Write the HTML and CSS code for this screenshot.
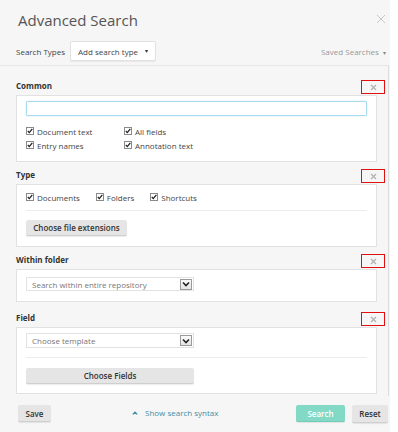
FILE: index.html
```html
<!DOCTYPE html>
<html lang="en">
<head>
<meta charset="utf-8">
<title>Advanced Search</title>
<link rel="stylesheet" href="styles.css">
</head>
<body>
<div class="dialog">
  <div class="header">
    <h1 class="title">Advanced Search</h1>
    <svg class="close" width="10" height="10" viewBox="0 0 10 10"><path d="M1 1L9 9M9 1L1 9" stroke="#c8c8c8" stroke-width="1" fill="none"/></svg>
  </div>
  <div class="toolbar">
    <span class="tb-label">Search Types</span>
    <div class="type-select">Add search type <span class="caret">&#9662;</span></div>
    <span class="saved">Saved Searches <span class="caret">&#9662;</span></span>
  </div>
  <div class="body">
    <section class="section">
      <div class="sec-head"><span class="sec-label">Common</span><span class="remove"><svg width="7" height="7" viewBox="0 0 7 7"><path d="M1 1L6 6M6 1L1 6" stroke="#b0b0b0" stroke-width="1.2" fill="none"/></svg></span></div>
      <div class="panel panel-common">
        <div class="text-input"></div>
        <div class="check-grid">
          <label class="check"><svg class="cb" width="8" height="8" viewBox="0 0 8 8"><rect x="0.5" y="0.5" width="7" height="7" fill="#fff" stroke="#8a8a8a"/><path d="M1.8 4L3.3 5.6L6.3 1.8" stroke="#222" stroke-width="1.3" fill="none"/></svg>Document text</label>
          <label class="check"><svg class="cb" width="8" height="8" viewBox="0 0 8 8"><rect x="0.5" y="0.5" width="7" height="7" fill="#fff" stroke="#8a8a8a"/><path d="M1.8 4L3.3 5.6L6.3 1.8" stroke="#222" stroke-width="1.3" fill="none"/></svg>All fields</label>
          <label class="check"><svg class="cb" width="8" height="8" viewBox="0 0 8 8"><rect x="0.5" y="0.5" width="7" height="7" fill="#fff" stroke="#8a8a8a"/><path d="M1.8 4L3.3 5.6L6.3 1.8" stroke="#222" stroke-width="1.3" fill="none"/></svg>Entry names</label>
          <label class="check"><svg class="cb" width="8" height="8" viewBox="0 0 8 8"><rect x="0.5" y="0.5" width="7" height="7" fill="#fff" stroke="#8a8a8a"/><path d="M1.8 4L3.3 5.6L6.3 1.8" stroke="#222" stroke-width="1.3" fill="none"/></svg>Annotation text</label>
        </div>
      </div>
    </section>

    <section class="section">
      <div class="sec-head"><span class="sec-label">Type</span><span class="remove"><svg width="7" height="7" viewBox="0 0 7 7"><path d="M1 1L6 6M6 1L1 6" stroke="#b0b0b0" stroke-width="1.2" fill="none"/></svg></span></div>
      <div class="panel panel-type">
        <div class="check-row">
          <label class="check"><svg class="cb" width="8" height="8" viewBox="0 0 8 8"><rect x="0.5" y="0.5" width="7" height="7" fill="#fff" stroke="#8a8a8a"/><path d="M1.8 4L3.3 5.6L6.3 1.8" stroke="#222" stroke-width="1.3" fill="none"/></svg>Documents</label>
          <label class="check"><svg class="cb" width="8" height="8" viewBox="0 0 8 8"><rect x="0.5" y="0.5" width="7" height="7" fill="#fff" stroke="#8a8a8a"/><path d="M1.8 4L3.3 5.6L6.3 1.8" stroke="#222" stroke-width="1.3" fill="none"/></svg>Folders</label>
          <label class="check"><svg class="cb" width="8" height="8" viewBox="0 0 8 8"><rect x="0.5" y="0.5" width="7" height="7" fill="#fff" stroke="#8a8a8a"/><path d="M1.8 4L3.3 5.6L6.3 1.8" stroke="#222" stroke-width="1.3" fill="none"/></svg>Shortcuts</label>
        </div>
        <div class="sep sep-type"></div>
        <button class="btn btn-ext">Choose file extensions</button>
      </div>
    </section>

    <section class="section">
      <div class="sec-head"><span class="sec-label">Within folder</span><span class="remove"><svg width="7" height="7" viewBox="0 0 7 7"><path d="M1 1L6 6M6 1L1 6" stroke="#b0b0b0" stroke-width="1.2" fill="none"/></svg></span></div>
      <div class="panel panel-folder">
        <div class="select">Search within entire repository<span class="sel-arrow"><svg width="8" height="6" viewBox="0 0 8 6"><path d="M1 1.5L4 4.5L7 1.5" stroke="#222" stroke-width="1.6" fill="none"/></svg></span></div>
      </div>
    </section>

    <section class="section section-field">
      <div class="sec-head"><span class="sec-label">Field</span><span class="remove"><svg width="7" height="7" viewBox="0 0 7 7"><path d="M1 1L6 6M6 1L1 6" stroke="#b0b0b0" stroke-width="1.2" fill="none"/></svg></span></div>
      <div class="panel panel-field">
        <div class="select select-tall">Choose template<span class="sel-arrow"><svg width="8" height="6" viewBox="0 0 8 6"><path d="M1 1.5L4 4.5L7 1.5" stroke="#222" stroke-width="1.6" fill="none"/></svg></span></div>
        <div class="sep sep-field"></div>
        <button class="btn btn-fields">Choose Fields</button>
      </div>
    </section>
  </div>
  <div class="footer">
    <button class="btn btn-save">Save</button>
    <span class="syntax"><svg class="up" width="6" height="4" viewBox="0 0 6 4"><path d="M0.8 3.4L3 1.2L5.2 3.4" stroke="#3d8fa6" stroke-width="1.3" fill="none"/></svg>Show search syntax</span>
    <button class="btn btn-search">Search</button>
    <button class="btn btn-reset">Reset</button>
  </div>
</div>
</body>
</html>
```

FILE: styles.css
```css
* { box-sizing: border-box; }
html, body { margin: 0; padding: 0; background: #fff; }
body {
  width: 398px;
  height: 432px;
  overflow: hidden;
  font-family: "Open Sans", "Noto Sans", sans-serif;
  font-size: 8px;
  color: #444;
}
.dialog {
  width: 390px;
  height: 432px;
  background: #f6f6f6;
  display: flex;
  flex-direction: column;
}
.header {
  display: flex;
  align-items: center;
  justify-content: space-between;
  padding: 10px 4px 11px 18px;
  height: 41px;
}
.title {
  margin: 0;
  font-size: 15px;
  font-weight: 400;
  line-height: 20px;
  color: #555;
}
.close { margin-top: -2px; margin-right: 0; }
.toolbar {
  display: flex;
  align-items: center;
  height: 24px;
  padding: 0 4px 4px 16px;
}
.tb-label { color: #444; }
.type-select {
  margin-left: 5px;
  width: 86px;
  height: 20px;
  background: #fff;
  border: 1px solid #e2e2e2;
  border-radius: 2px;
  box-shadow: 0 1px 1px rgba(0,0,0,0.06);
  display: flex;
  align-items: center;
  padding-left: 7px;
  color: #444;
}
.type-select .caret { margin-left: 7px; font-size: 6px; color: #333; }
.saved { margin-left: auto; color: #999; }
.saved .caret { font-size: 6px; margin-left: 2px; color: #888; }
.body {
  width: 389px;
  height: 331px;
  border-top: 1px solid #e6e6e6;
  border-right: 1px solid #dcdcdc;
  padding: 14px 3px 0 16px;
  overflow: hidden;
}
.section { margin-top: 7px; }
.section:first-child { margin-top: 0; }
.section-field { margin-top: 10px; }
.sec-head {
  display: flex;
  justify-content: space-between;
  height: 14px;
  margin-bottom: 1px;
}
.sec-label {
  font-weight: 700;
  color: #333;
  line-height: 12px;
}
.remove {
  width: 24px;
  height: 14px;
  border: 1px solid #e01010;
  display: flex;
  align-items: center;
  justify-content: center;
}
.panel {
  width: 361px;
  background: #fff;
  border: 1px solid #e2e2e2;
  padding: 5px 9px 9px 9px;
}
.text-input {
  height: 15px;
  border: 1px solid #a9d9ec;
  border-radius: 1px;
  box-shadow: 0 0 2px rgba(120,200,230,0.4);
}
.check-grid {
  margin-top: 8px;
  display: grid;
  grid-template-columns: 98px auto;
}
.check {
  display: flex;
  align-items: center;
  height: 14px;
  color: #444;
}
.cb { margin-right: 3px; flex: none; }
.check-row {
  display: flex;
  gap: 16px;
}
.panel-type { padding-bottom: 10px; }
.sep { height: 1px; background: #ececec; }
.sep-type { margin: 6px 0 9px; }
.btn {
  font-family: "Open Sans", "Noto Sans", sans-serif;
  font-size: 8px;
  font-weight: 600;
  color: #333;
  background: #e5e5e5;
  border: none;
  border-bottom: 1px solid #cfcfcf;
  border-radius: 2px;
  box-shadow: 0 1px 1px rgba(0,0,0,0.08);
  padding: 0;
  margin: 0;
  display: block;
}
.btn-ext { width: 101px; height: 16px; }
.panel-folder { padding: 7px 9px 10px; }
.select {
  width: 168px;
  height: 14px;
  border: 1px solid #e2e2e2;
  display: flex;
  align-items: center;
  padding-left: 5px;
  color: #777;
  position: relative;
}
.select-tall { height: 15px; }
.sel-arrow {
  margin-left: auto;
  margin-right: 1px;
  width: 12px;
  height: 11px;
  border: 1px solid #9a9a9a;
  background: linear-gradient(#fafafa, #e4e4e4);
  display: flex;
  align-items: center;
  justify-content: center;
}
.sep-field { margin: 9px 0 10px; }
.btn-fields { width: 168px; height: 16px; }
.footer {
  display: flex;
  align-items: flex-start;
  padding: 9px 2px 0 18px;
}
.btn-save { width: 33px; height: 17px; }
.syntax {
  margin-left: 81px;
  margin-top: 2px;
  display: flex;
  align-items: center;
  color: #3d8fa6;
}
.up { margin-right: 7px; }
.btn-search {
  margin-left: auto;
  width: 49px;
  height: 17px;
  background: #82d9c5;
  color: #fff;
  border-bottom: 1px solid #74cbb7;
}
.btn-reset { margin-left: 7px; width: 36px; height: 18px; }
```
